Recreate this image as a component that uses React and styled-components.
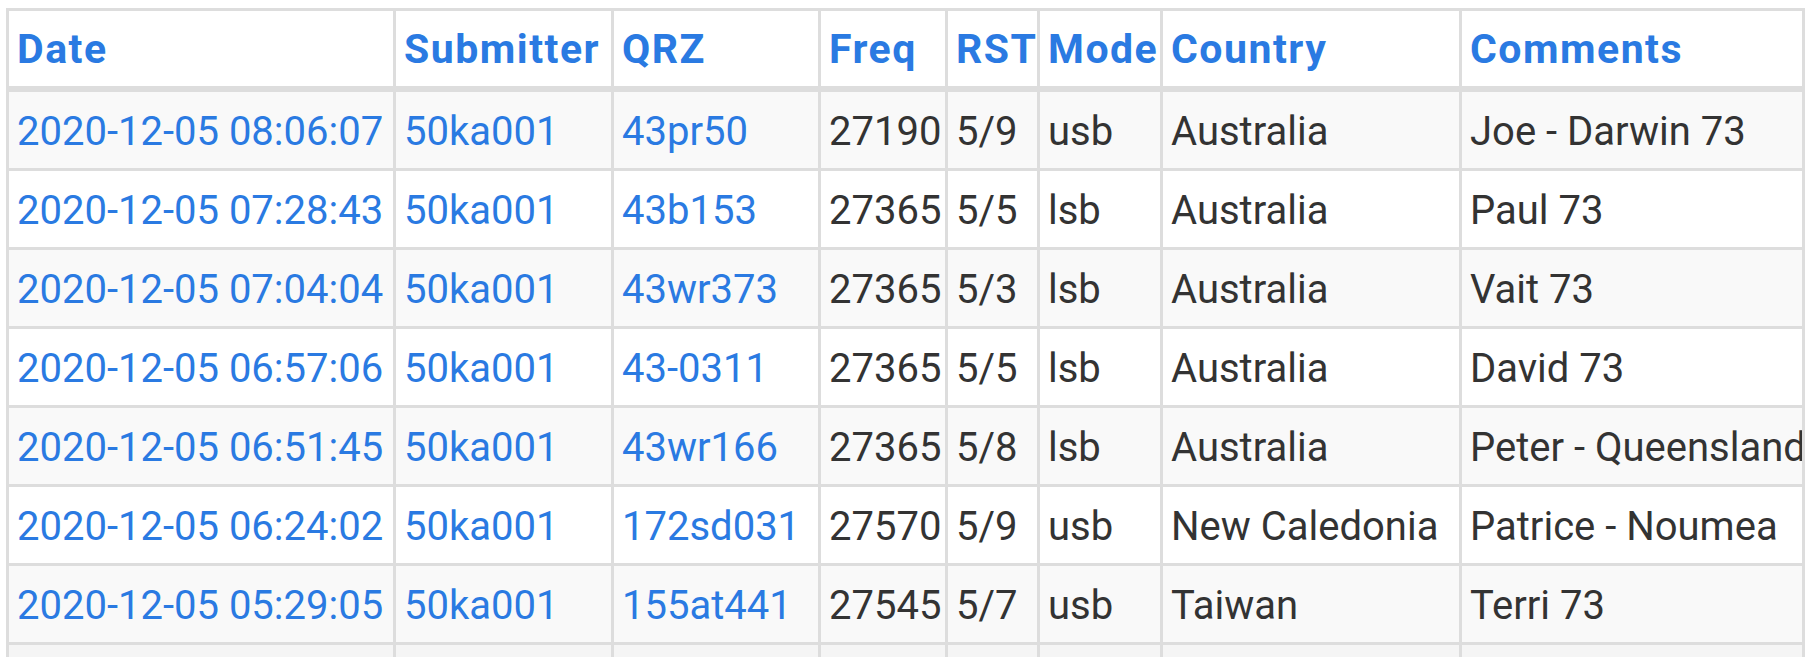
import React from 'react';
import styled, { createGlobalStyle } from 'styled-components';

const GlobalStyle = createGlobalStyle`
	html, body {
		margin: 0;
		background: #fff;
	}
	body {
		font-family: Roboto, "Liberation Sans", sans-serif;
		color: #333;
	}
`;

const Page = styled.div`
	padding: 8px 0 0 6px;
`;

const Table = styled.table`
	width: 1796px;
	table-layout: fixed;
	border-collapse: collapse;
	border: 3px solid #ddd;
`;

const HeadCell = styled.th`
	border: 3px solid #ddd;
	border-bottom-width: 6px;
	padding: 2px 8px 0;
	font-size: 41px;
	line-height: 73px;
	text-align: left;
	font-weight: 700;
	letter-spacing: 1.5px;
	white-space: nowrap;
	overflow: hidden;
	a {
		color: #2a7ae2;
		text-decoration: none;
	}
`;

const Row = styled.tr`
	background: ${p => (p.$shade ? p.$shade : 'transparent')};
`;

const Cell = styled.td`
	border: 3px solid #ddd;
	padding: 4px 8px 0;
	font-size: 40px;
	line-height: 72px;
	white-space: nowrap;
	overflow: hidden;
	a {
		color: #2a7ae2;
		text-decoration: none;
	}
`;

const columns = [
	{ key: 'date', label: 'Date', width: 387 },
	{ key: 'submitter', label: 'Submitter', width: 218 },
	{ key: 'qrz', label: 'QRZ', width: 207 },
	{ key: 'freq', label: 'Freq', width: 127 },
	{ key: 'rst', label: 'RST', width: 92 },
	{ key: 'mode', label: 'Mode', width: 123 },
	{ key: 'country', label: 'Country', width: 299 },
	{ key: 'comments', label: 'Comments', width: 343 },
];

const logs = [
	['2020-12-05 08:06:07', '50ka001', '43pr50', '27190', '5/9', 'usb', 'Australia', 'Joe - Darwin 73'],
	['2020-12-05 07:28:43', '50ka001', '43b153', '27365', '5/5', 'lsb', 'Australia', 'Paul 73'],
	['2020-12-05 07:04:04', '50ka001', '43wr373', '27365', '5/3', 'lsb', 'Australia', 'Vait 73'],
	['2020-12-05 06:57:06', '50ka001', '43-0311', '27365', '5/5', 'lsb', 'Australia', 'David 73'],
	['2020-12-05 06:51:45', '50ka001', '43wr166', '27365', '5/8', 'lsb', 'Australia', 'Peter - Queensland'],
	['2020-12-05 06:24:02', '50ka001', '172sd031', '27570', '5/9', 'usb', 'New Caledonia', 'Patrice - Noumea'],
	['2020-12-05 05:29:05', '50ka001', '155at441', '27545', '5/7', 'usb', 'Taiwan', 'Terri 73'],
	['2020-12-05 05:12:40', '50ka001', '43pr50', '27190', '5/9', 'usb', 'Australia', 'Joe 73'],
];

const linked = [true, true, true, false, false, false, false, false];

const App = () => {
	return (
		<Page>
			<GlobalStyle />
			<Table>
				<colgroup>
					{columns.map(c => (
						<col key={c.key} style={{ width: c.width }} />
					))}
				</colgroup>
				<thead>
					<tr>
						{columns.map(c => (
							<HeadCell key={c.key}>
								<a href="#">{c.label}</a>
							</HeadCell>
						))}
					</tr>
				</thead>
				<tbody>
					{logs.map((row, i) => (
						<Row key={i} $shade={i === 7 ? '#f5f5f5' : i % 2 === 0 ? '#f9f9f9' : null}>
							{row.map((v, j) => (
								<Cell key={j}>
									{linked[j] ? <a href="#">{v}</a> : v}
								</Cell>
							))}
						</Row>
					))}
				</tbody>
			</Table>
		</Page>
	);
};

export default App;
